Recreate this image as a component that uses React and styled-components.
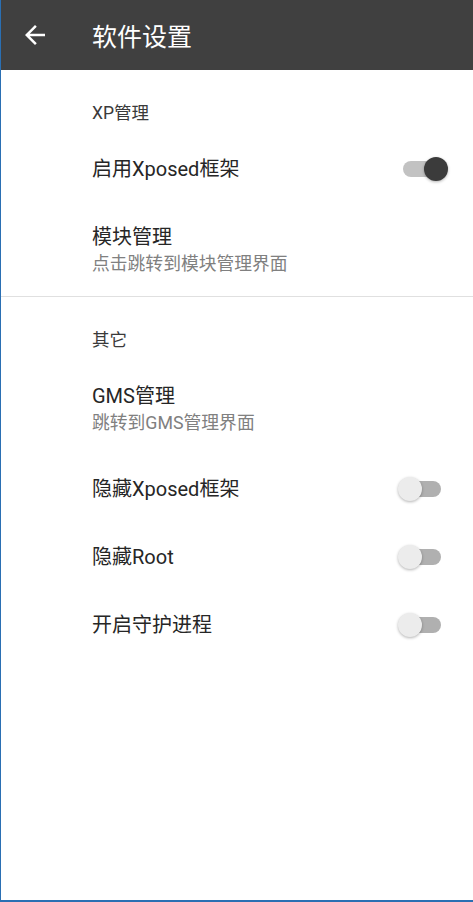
import styled, { createGlobalStyle } from "styled-components";

const GlobalStyle = createGlobalStyle`
  html, body {
    margin: 0;
    padding: 0;
    background: #ffffff;
  }
  body {
    font-family: Roboto, "Noto Sans CJK SC", "Noto Sans", sans-serif;
  }
`;

const items = [
  { type: "category", title: "XP管理" },
  { type: "switch", title: "启用Xposed框架", on: true },
  { type: "link", title: "模块管理", summary: "点击跳转到模块管理界面" },
  { type: "divider" },
  { type: "category", title: "其它" },
  { type: "link", title: "GMS管理", summary: "跳转到GMS管理界面" },
  { type: "switch", title: "隐藏Xposed框架", on: false },
  { type: "switch", title: "隐藏Root", on: false },
  { type: "switch", title: "开启守护进程", on: false },
];

export default function App() {
  return (
    <>
      <GlobalStyle />
      <Page>
        <Toolbar>
          <BackButton>
            <svg width="30" height="30" viewBox="0 0 24 24" fill="#ffffff">
              <path d="M20 11H7.83l5.59-5.59L12 4l-8 8 8 8 1.41-1.41L7.83 13H20v-2z" />
            </svg>
          </BackButton>
          <Title>软件设置</Title>
        </Toolbar>

        <List>
          {items.map((item, i) => {
            if (item.type === "divider") return <Divider key={i} />;
            if (item.type === "category")
              return <Category key={i}>{item.title}</Category>;
            if (item.type === "link")
              return (
                <TwoLineRow key={i}>
                  <ItemTitle>{item.title}</ItemTitle>
                  <Summary>{item.summary}</Summary>
                </TwoLineRow>
              );
            return (
              <Row key={i}>
                <ItemTitle>{item.title}</ItemTitle>
                <Switch $on={item.on}>
                  <Track $on={item.on} />
                  <Thumb $on={item.on} />
                </Switch>
              </Row>
            );
          })}
        </List>
      </Page>
    </>
  );
}

const Page = styled.div`
  box-sizing: border-box;
  width: 473px;
  height: 902px;
  background: #ffffff;
  border-left: 1px solid #2a6fb3;
  border-bottom: 2px solid #2a6fb3;
  display: flex;
  flex-direction: column;
`;

const Toolbar = styled.div`
  height: 70px;
  background: #404040;
  display: flex;
  align-items: center;
  flex-shrink: 0;
`;

const BackButton = styled.div`
  width: 30px;
  height: 30px;
  margin-left: 19px;
  display: flex;
`;

const Title = styled.div`
  margin-left: 42px;
  color: #ffffff;
  font-size: 25px;
  font-weight: 400;
`;

const List = styled.div`
  display: flex;
  flex-direction: column;
`;

const Category = styled.div`
  height: 65px;
  box-sizing: border-box;
  padding: 32px 25px 0 91px;
  font-size: 17.5px;
  line-height: 22px;
  color: #3a3a3a;
  font-weight: 400;
`;

const Row = styled.div`
  height: 68px;
  box-sizing: border-box;
  padding: 0 25px 0 91px;
  display: flex;
  align-items: center;
  justify-content: space-between;
`;

const TwoLineRow = styled.div`
  height: 93px;
  box-sizing: border-box;
  padding: 21px 25px 0 91px;
  display: flex;
  flex-direction: column;
`;

const ItemTitle = styled.div`
  font-size: 20px;
  line-height: 26px;
  color: #262626;
`;

const Summary = styled.div`
  margin-top: 2px;
  font-size: 17.8px;
  line-height: 24px;
  color: #808080;
`;

const Divider = styled.div`
  height: 1px;
  background: #e0e0e0;
`;

const Switch = styled.div`
  position: relative;
  width: 50px;
  height: 26px;
  flex-shrink: 0;
`;

const Track = styled.div`
  position: absolute;
  left: 5px;
  top: 5px;
  width: 38px;
  height: 16px;
  border-radius: 8px;
  background: ${(p) => (p.$on ? "#c2c2c2" : "#b0b0b0")};
`;

const Thumb = styled.div`
  position: absolute;
  top: 1px;
  left: ${(p) => (p.$on ? "26px" : "0px")};
  width: 24px;
  height: 24px;
  border-radius: 50%;
  background: ${(p) => (p.$on ? "#3b3b3b" : "#ececec")};
  box-shadow: 0 1px 3px rgba(0, 0, 0, 0.3);
`;
